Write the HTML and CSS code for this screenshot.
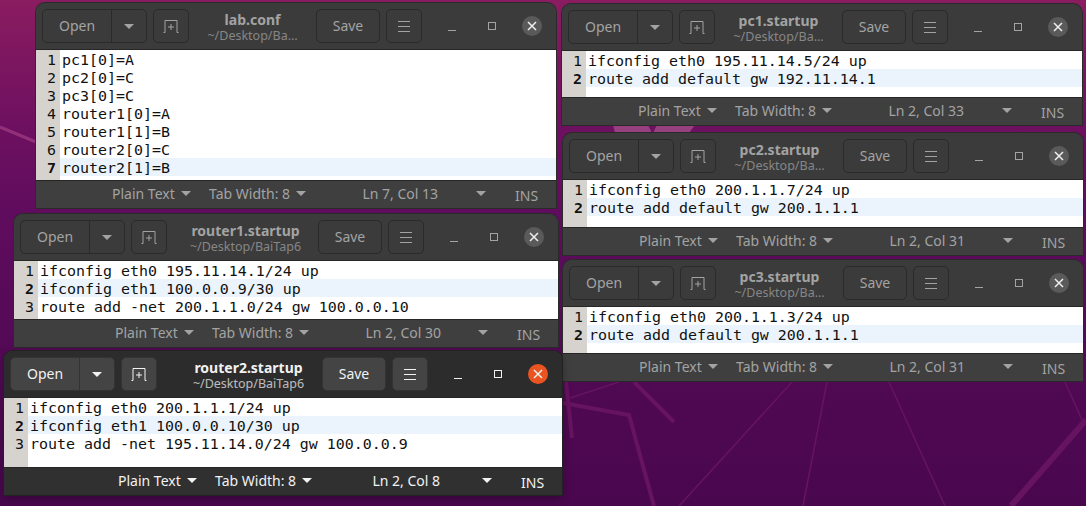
FILE: index.html
```html
<!DOCTYPE html>
<html lang="en">
<head>
<meta charset="utf-8">
<title>gedit windows</title>
<link rel="stylesheet" href="styles.css">
</head>
<body>
<main class="desktop">
  <svg class="wallpaper" width="1086" height="506" viewBox="0 0 1086 506" aria-hidden="true">
    <defs>
      <linearGradient id="wall" x1="0" y1="0" x2="0" y2="1">
        <stop offset="0" stop-color="#8a1c60"/>
        <stop offset="0.25" stop-color="#6e1060"/>
        <stop offset="0.42" stop-color="#600c5e"/>
        <stop offset="0.75" stop-color="#500953"/>
        <stop offset="1" stop-color="#49074e"/>
      </linearGradient>
    </defs>
    <rect width="1086" height="506" fill="url(#wall)"/>
    <path d="M0 127L36 142" stroke="#92307a" stroke-width="3" fill="none"/>
    <path d="M613 125H648L652 133H615ZM657 125H695L689 133H653Z" fill="#964080"/>
    <path d="M563 403L629 415L654 506M634 382L674 422M566 382L572 438" stroke="#661360" stroke-width="4" fill="none"/>
    <path d="M1086 420L1011 506" stroke="#661360" stroke-width="6" fill="none"/>
    <path d="M570 398L619 382M792 382L679 506M827 382L803 506M889 382L945 506M1065 382L1082 420" stroke="#661360" stroke-width="1.6" fill="none"/>
  </svg>

  <section class="window win-lab">
    <header class="headerbar">
      <div class="open-group"><span class="open-label">Open</span><span class="open-arrow"><i class="caret"></i></span></div>
      <button class="btn btn-icon"><svg width="16" height="16" viewBox="0 0 16 16"><path d="M0.5 14.5H2V2.5H14V14.5H15.5M8 6V12M5 9H11" fill="none" stroke="currentColor"/></svg></button>
      <div class="title"><strong>lab.conf</strong><small>~/Desktop/Ba…</small></div>
      <button class="btn btn-save">Save</button>
      <button class="btn btn-icon"><svg width="16" height="16" viewBox="0 0 16 16"><path d="M2 3.5H14M2 8.5H14M2 13.5H14" fill="none" stroke="currentColor"/></svg></button>
      <div class="controls">
        <svg width="12" height="12" viewBox="0 0 12 12"><path d="M2 10.5H10" stroke="currentColor"/></svg>
        <svg width="12" height="12" viewBox="0 0 12 12"><rect x="2.5" y="2.5" width="7" height="7" fill="none" stroke="currentColor"/></svg>
        <span class="close"><svg width="10" height="10" viewBox="0 0 10 10"><path d="M1 1L9 9M9 1L1 9" stroke="#f0f0f0" stroke-width="1.5"/></svg></span>
      </div>
    </header>
    <div class="editor">
      <div class="row"><span class="num">1</span><span class="code">pc1[0]=A</span></div>
      <div class="row"><span class="num">2</span><span class="code">pc2[0]=C</span></div>
      <div class="row"><span class="num">3</span><span class="code">pc3[0]=C</span></div>
      <div class="row"><span class="num">4</span><span class="code">router1[0]=A</span></div>
      <div class="row"><span class="num">5</span><span class="code">router1[1]=B</span></div>
      <div class="row"><span class="num">6</span><span class="code">router2[0]=C</span></div>
      <div class="row current"><span class="num">7</span><span class="code">router2[1]=B</span></div>
    </div>
    <footer class="statusbar">
      <span class="st st-plain">Plain Text<i class="caret"></i></span>
      <span class="st st-tab">Tab Width: 8<i class="caret"></i></span>
      <span class="st st-pos">Ln 7, Col 13</span>
      <i class="caret st-arrow"></i>
      <span class="st st-ins">INS</span>
    </footer>
  </section>

  <section class="window win-pc1">
    <header class="headerbar">
      <div class="open-group"><span class="open-label">Open</span><span class="open-arrow"><i class="caret"></i></span></div>
      <button class="btn btn-icon"><svg width="16" height="16" viewBox="0 0 16 16"><path d="M0.5 14.5H2V2.5H14V14.5H15.5M8 6V12M5 9H11" fill="none" stroke="currentColor"/></svg></button>
      <div class="title"><strong>pc1.startup</strong><small>~/Desktop/Ba…</small></div>
      <button class="btn btn-save">Save</button>
      <button class="btn btn-icon"><svg width="16" height="16" viewBox="0 0 16 16"><path d="M2 3.5H14M2 8.5H14M2 13.5H14" fill="none" stroke="currentColor"/></svg></button>
      <div class="controls">
        <svg width="12" height="12" viewBox="0 0 12 12"><path d="M2 10.5H10" stroke="currentColor"/></svg>
        <svg width="12" height="12" viewBox="0 0 12 12"><rect x="2.5" y="2.5" width="7" height="7" fill="none" stroke="currentColor"/></svg>
        <span class="close"><svg width="10" height="10" viewBox="0 0 10 10"><path d="M1 1L9 9M9 1L1 9" stroke="#f0f0f0" stroke-width="1.5"/></svg></span>
      </div>
    </header>
    <div class="editor">
      <div class="row"><span class="num">1</span><span class="code">ifconfig eth0 195.11.14.5/24 up</span></div>
      <div class="row current"><span class="num">2</span><span class="code">route add default gw 192.11.14.1</span></div>
    </div>
    <footer class="statusbar">
      <span class="st st-plain">Plain Text<i class="caret"></i></span>
      <span class="st st-tab">Tab Width: 8<i class="caret"></i></span>
      <span class="st st-pos">Ln 2, Col 33</span>
      <i class="caret st-arrow"></i>
      <span class="st st-ins">INS</span>
    </footer>
  </section>

  <section class="window win-pc2">
    <header class="headerbar">
      <div class="open-group"><span class="open-label">Open</span><span class="open-arrow"><i class="caret"></i></span></div>
      <button class="btn btn-icon"><svg width="16" height="16" viewBox="0 0 16 16"><path d="M0.5 14.5H2V2.5H14V14.5H15.5M8 6V12M5 9H11" fill="none" stroke="currentColor"/></svg></button>
      <div class="title"><strong>pc2.startup</strong><small>~/Desktop/Ba…</small></div>
      <button class="btn btn-save">Save</button>
      <button class="btn btn-icon"><svg width="16" height="16" viewBox="0 0 16 16"><path d="M2 3.5H14M2 8.5H14M2 13.5H14" fill="none" stroke="currentColor"/></svg></button>
      <div class="controls">
        <svg width="12" height="12" viewBox="0 0 12 12"><path d="M2 10.5H10" stroke="currentColor"/></svg>
        <svg width="12" height="12" viewBox="0 0 12 12"><rect x="2.5" y="2.5" width="7" height="7" fill="none" stroke="currentColor"/></svg>
        <span class="close"><svg width="10" height="10" viewBox="0 0 10 10"><path d="M1 1L9 9M9 1L1 9" stroke="#f0f0f0" stroke-width="1.5"/></svg></span>
      </div>
    </header>
    <div class="editor">
      <div class="row"><span class="num">1</span><span class="code">ifconfig eth0 200.1.1.7/24 up</span></div>
      <div class="row current"><span class="num">2</span><span class="code">route add default gw 200.1.1.1</span></div>
    </div>
    <footer class="statusbar">
      <span class="st st-plain">Plain Text<i class="caret"></i></span>
      <span class="st st-tab">Tab Width: 8<i class="caret"></i></span>
      <span class="st st-pos">Ln 2, Col 31</span>
      <i class="caret st-arrow"></i>
      <span class="st st-ins">INS</span>
    </footer>
  </section>

  <section class="window win-pc3">
    <header class="headerbar">
      <div class="open-group"><span class="open-label">Open</span><span class="open-arrow"><i class="caret"></i></span></div>
      <button class="btn btn-icon"><svg width="16" height="16" viewBox="0 0 16 16"><path d="M0.5 14.5H2V2.5H14V14.5H15.5M8 6V12M5 9H11" fill="none" stroke="currentColor"/></svg></button>
      <div class="title"><strong>pc3.startup</strong><small>~/Desktop/Ba…</small></div>
      <button class="btn btn-save">Save</button>
      <button class="btn btn-icon"><svg width="16" height="16" viewBox="0 0 16 16"><path d="M2 3.5H14M2 8.5H14M2 13.5H14" fill="none" stroke="currentColor"/></svg></button>
      <div class="controls">
        <svg width="12" height="12" viewBox="0 0 12 12"><path d="M2 10.5H10" stroke="currentColor"/></svg>
        <svg width="12" height="12" viewBox="0 0 12 12"><rect x="2.5" y="2.5" width="7" height="7" fill="none" stroke="currentColor"/></svg>
        <span class="close"><svg width="10" height="10" viewBox="0 0 10 10"><path d="M1 1L9 9M9 1L1 9" stroke="#f0f0f0" stroke-width="1.5"/></svg></span>
      </div>
    </header>
    <div class="editor">
      <div class="row"><span class="num">1</span><span class="code">ifconfig eth0 200.1.1.3/24 up</span></div>
      <div class="row current"><span class="num">2</span><span class="code">route add default gw 200.1.1.1</span></div>
    </div>
    <footer class="statusbar">
      <span class="st st-plain">Plain Text<i class="caret"></i></span>
      <span class="st st-tab">Tab Width: 8<i class="caret"></i></span>
      <span class="st st-pos">Ln 2, Col 31</span>
      <i class="caret st-arrow"></i>
      <span class="st st-ins">INS</span>
    </footer>
  </section>

  <section class="window win-r1">
    <header class="headerbar">
      <div class="open-group"><span class="open-label">Open</span><span class="open-arrow"><i class="caret"></i></span></div>
      <button class="btn btn-icon"><svg width="16" height="16" viewBox="0 0 16 16"><path d="M0.5 14.5H2V2.5H14V14.5H15.5M8 6V12M5 9H11" fill="none" stroke="currentColor"/></svg></button>
      <div class="title"><strong>router1.startup</strong><small>~/Desktop/BaiTap6</small></div>
      <button class="btn btn-save">Save</button>
      <button class="btn btn-icon"><svg width="16" height="16" viewBox="0 0 16 16"><path d="M2 3.5H14M2 8.5H14M2 13.5H14" fill="none" stroke="currentColor"/></svg></button>
      <div class="controls">
        <svg width="12" height="12" viewBox="0 0 12 12"><path d="M2 10.5H10" stroke="currentColor"/></svg>
        <svg width="12" height="12" viewBox="0 0 12 12"><rect x="2.5" y="2.5" width="7" height="7" fill="none" stroke="currentColor"/></svg>
        <span class="close"><svg width="10" height="10" viewBox="0 0 10 10"><path d="M1 1L9 9M9 1L1 9" stroke="#f0f0f0" stroke-width="1.5"/></svg></span>
      </div>
    </header>
    <div class="editor">
      <div class="row"><span class="num">1</span><span class="code">ifconfig eth0 195.11.14.1/24 up</span></div>
      <div class="row current"><span class="num">2</span><span class="code">ifconfig eth1 100.0.0.9/30 up</span></div>
      <div class="row"><span class="num">3</span><span class="code">route add -net 200.1.1.0/24 gw 100.0.0.10</span></div>
    </div>
    <footer class="statusbar">
      <span class="st st-plain">Plain Text<i class="caret"></i></span>
      <span class="st st-tab">Tab Width: 8<i class="caret"></i></span>
      <span class="st st-pos">Ln 2, Col 30</span>
      <i class="caret st-arrow"></i>
      <span class="st st-ins">INS</span>
    </footer>
  </section>

  <section class="window win-r2 active">
    <header class="headerbar">
      <div class="open-group"><span class="open-label">Open</span><span class="open-arrow"><i class="caret"></i></span></div>
      <button class="btn btn-icon"><svg width="16" height="16" viewBox="0 0 16 16"><path d="M0.5 14.5H2V2.5H14V14.5H15.5M8 6V12M5 9H11" fill="none" stroke="currentColor"/></svg></button>
      <div class="title"><strong>router2.startup</strong><small>~/Desktop/BaiTap6</small></div>
      <button class="btn btn-save">Save</button>
      <button class="btn btn-icon"><svg width="16" height="16" viewBox="0 0 16 16"><path d="M2 3.5H14M2 8.5H14M2 13.5H14" fill="none" stroke="currentColor"/></svg></button>
      <div class="controls">
        <svg width="12" height="12" viewBox="0 0 12 12"><path d="M2 10.5H10" stroke="currentColor"/></svg>
        <svg width="12" height="12" viewBox="0 0 12 12"><rect x="2.5" y="2.5" width="7" height="7" fill="none" stroke="currentColor"/></svg>
        <span class="close"><svg width="10" height="10" viewBox="0 0 10 10"><path d="M1 1L9 9M9 1L1 9" stroke="#f0f0f0" stroke-width="1.5"/></svg></span>
      </div>
    </header>
    <div class="editor">
      <div class="row"><span class="num">1</span><span class="code">ifconfig eth0 200.1.1.1/24 up</span></div>
      <div class="row current"><span class="num">2</span><span class="code">ifconfig eth1 100.0.0.10/30 up</span></div>
      <div class="row"><span class="num">3</span><span class="code">route add -net 195.11.14.0/24 gw 100.0.0.9</span></div>
    </div>
    <footer class="statusbar">
      <span class="st st-plain">Plain Text<i class="caret"></i></span>
      <span class="st st-tab">Tab Width: 8<i class="caret"></i></span>
      <span class="st st-pos">Ln 2, Col 8</span>
      <i class="caret st-arrow"></i>
      <span class="st st-ins">INS</span>
    </footer>
  </section>
</main>
</body>
</html>
```
FILE: styles.css
```css
* { box-sizing: border-box; }
html, body { margin: 0; padding: 0; }
body { width: 1086px; height: 506px; overflow: hidden; background: #4f0850; }
.desktop { position: relative; width: 1086px; height: 506px; overflow: hidden; font-family: "Noto Sans", sans-serif; }
.wallpaper { position: absolute; left: 0; top: 0; display: block; }

.window {
  position: absolute;
  display: flex;
  flex-direction: column;
  background: #3b3b3b;
  color: #a3a3a3;
  border-radius: 9px 9px 0 0;
  box-shadow: 0 0 0 1px #2a2a2a;
  --bar: #3b3b3b;
  --status: #3f3f3f;
  --edge: #262626;
  --btn: #3b3b3b;
  --btn-border: #2a2a2a;
}
.window.active {
  color: #f2f2f2;
  --bar: #2c2c2c;
  --status: #303030;
  --btn: #444444;
  --btn-border: #333333;
  box-shadow: 0 0 0 1px #222222, 0 3px 8px rgba(0, 0, 0, 0.35);
}

.win-lab { left: 36px; top: 3px; width: 520px; height: 205px; }
.win-pc1 { left: 562px; top: 4px; width: 520px; height: 121px; }
.win-pc2 { left: 563px; top: 133px; width: 520px; height: 122px; }
.win-pc3 { left: 563px; top: 260px; width: 520px; height: 121px; }
.win-r1 { left: 14px; top: 214px; width: 544px; height: 133px; }
.win-r2 { left: 4px; top: 351px; width: 558px; height: 144px; }

.headerbar {
  flex: none;
  height: 47px;
  display: flex;
  align-items: center;
  padding: 0 0 0 6px;
  background: var(--bar);
  border-radius: 9px 9px 0 0;
  border-bottom: 1px solid var(--edge);
  font-size: 14px;
}
.open-group, .btn {
  height: 34px;
  background: var(--btn);
  border: 1px solid var(--btn-border);
  border-radius: 5px;
  color: inherit;
  font: inherit;
  padding: 0;
}
.open-group { flex: none; width: 105px; display: flex; align-items: stretch; }
.open-label { width: 69px; display: flex; align-items: center; justify-content: center; border-right: 1px solid var(--btn-border); padding-bottom: 2px; }
.open-arrow { flex: 1; display: flex; align-items: center; justify-content: center; }
.btn { flex: none; display: flex; align-items: center; justify-content: center; }
.btn-icon { width: 36px; margin-left: 6px; }
.btn-save { width: 64px; padding-bottom: 2px; }

.title { flex: 1; min-width: 0; display: flex; flex-direction: column; align-items: center; padding-top: 2px; }
.title strong { font-size: 14px; line-height: 16px; font-weight: 700; }
.title small { font-size: 12.5px; line-height: 15px; opacity: 0.72; }
.win-r2 .title { padding-left: 18px; }
.win-r1 .title { padding-left: 6px; }

.controls { flex: none; width: 134px; height: 24px; display: flex; align-items: center; padding-left: 24px; gap: 28px; }
.close { width: 20px; height: 20px; border-radius: 50%; background: #5a5a5a; display: flex; align-items: center; justify-content: center; margin-left: -4px; }
.active .close { background: #e95420; }

.caret { display: inline-block; width: 0; height: 0; border-left: 5px solid transparent; border-right: 5px solid transparent; border-top: 5px solid currentColor; }

.editor { flex: 1; min-height: 0; background: #ffffff; display: flex; flex-direction: column; background-image: linear-gradient(#d6d3cf, #d6d3cf); background-repeat: no-repeat; background-size: 24px 100%; }
.row { display: flex; height: 18px; flex: none; font-family: "DejaVu Sans Mono", monospace; font-size: 14.95px; line-height: 20px; color: #111111; white-space: pre; }
.num { flex: none; width: 24px; padding-right: 4px; text-align: right; }
.code { flex: 1; height: 18px; padding-left: 2px; }
.current .code { background: #ebf4fc; }
.current .num { font-weight: 700; }

.statusbar {
  flex: none;
  height: 28px;
  display: flex;
  align-items: center;
  justify-content: flex-end;
  padding: 0 18px 2px 0;
  background: var(--status);
  border-top: 1px solid var(--edge);
  font-size: 14px;
}
.st { flex: none; white-space: nowrap; display: flex; align-items: center; }
.st .caret { margin-left: 6px; }
.st-plain { width: 97px; }
.st-tab { width: 99px; }
.st-pos { width: 130px; justify-content: flex-end; }
.win-r1 .st-pos { margin-right: -1px; }
.win-r2 .st-pos { padding-right: 4px; }
.st-arrow { flex: none; margin-left: 38px; }
.st-ins { margin-left: 29px; width: 23px; padding-top: 3px; }
```
